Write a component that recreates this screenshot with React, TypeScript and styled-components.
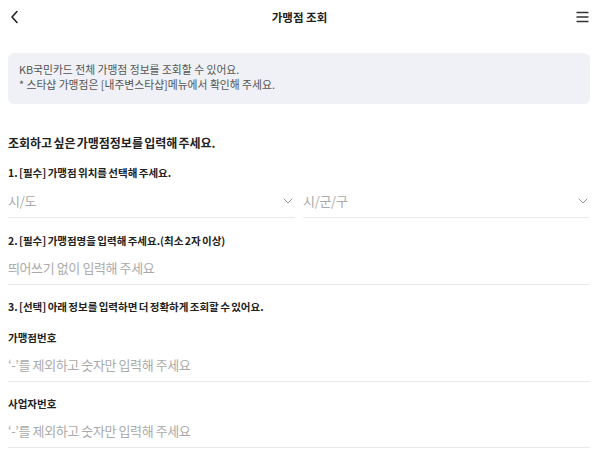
import styled, { createGlobalStyle } from "styled-components"

const GlobalStyle = createGlobalStyle`
  html, body {
    margin: 0;
    padding: 0;
    background: #fff;
  }
  body {
    font-family: "Noto Sans CJK KR", "Noto Sans", sans-serif;
    color: #222;
  }
  * {
    box-sizing: border-box;
  }
`

const Page = styled.div`
  width: 600px;
  display: flex;
  flex-direction: column;
`
const Header = styled.header`
  height: 34px;
  display: grid;
  grid-template-columns: 40px 1fr 40px;
  align-items: center;
  padding: 0 11px 0 10px;
`
const HeaderButton = styled.button<{ align?: string }>`
  border: none;
  background: none;
  padding: 0;
  display: flex;
  justify-content: ${props => props.align ?? "flex-start"};
  align-items: center;
  color: #333;
  cursor: pointer;
`
const Title = styled.h1`
  margin: 0;
  text-align: center;
  font-size: 11.5px;
  font-weight: 700;
  color: #222;
`
const InfoBox = styled.div`
  margin: 19px 10px 0 8px;
  padding: 9px 11px 12px;
  background-color: #eff1f6;
  border-radius: 6px;
  font-size: 10.8px;
  line-height: 15px;
  color: #555;
`
const InfoLine = styled.p`
  margin: 0;
`
const Form = styled.div`
  padding: 0 10px 0 8px;
  display: flex;
  flex-direction: column;
`
const Heading = styled.h2`
  margin: 30px 0 0;
  font-size: 12px;
  line-height: 18px;
  font-weight: 700;
  color: #222;
  word-spacing: -1.5px;
`
const Label = styled.div<{ top?: string }>`
  margin-top: ${props => props.top ?? "14px"};
  font-size: 10.5px;
  line-height: 16px;
  font-weight: 700;
  color: #222;
  word-spacing: -1px;
`
const SelectRow = styled.div`
  margin-top: 3px;
  display: grid;
  grid-template-columns: 1fr 1fr;
  column-gap: 8px;
`
const Select = styled.div`
  height: 34px;
  display: flex;
  align-items: center;
  justify-content: space-between;
  border-bottom: 1px solid #e9e9e9;
  font-size: 13px;
  letter-spacing: -0.3px;
  color: #aaa;
  padding-right: 2px;
`
const Input = styled.input`
  margin-top: 2px;
  height: 34px;
  width: 100%;
  border: none;
  border-bottom: 1px solid #e9e9e9;
  padding: 0;
  outline: none;
  background: none;
  font-family: "Noto Sans CJK KR", "Noto Sans", sans-serif;
  font-size: 13px;
  letter-spacing: -0.4px;
  color: #222;
  &::placeholder {
    color: #aaa;
  }
`

function Chevron() {
  return (
    <svg width="10" height="6" viewBox="0 0 10 6" fill="none">
      <path d="M1 1l4 4 4-4" stroke="#999" strokeWidth="1" strokeLinecap="round" strokeLinejoin="round" />
    </svg>
  )
}

export default function App() {
  return (
    <Page>
      <GlobalStyle />
      <Header>
        <HeaderButton aria-label="뒤로">
          <svg width="10" height="14" viewBox="0 0 10 14" fill="none">
            <path d="M7 1.5L2 7l5 5.5" stroke="#222" strokeWidth="1.6" strokeLinecap="round" strokeLinejoin="round" />
          </svg>
        </HeaderButton>
        <Title>가맹점 조회</Title>
        <HeaderButton align="flex-end" aria-label="메뉴">
          <svg width="13" height="12" viewBox="0 0 13 12" fill="none">
            <path d="M0.5 1.5h12M0.5 6h12M0.5 10.5h12" stroke="#333" strokeWidth="1.5" />
          </svg>
        </HeaderButton>
      </Header>

      <InfoBox>
        <InfoLine>KB국민카드 전체 가맹점 정보를 조회할 수 있어요.</InfoLine>
        <InfoLine>* 스타샵 가맹점은 [내주변스타샵]메뉴에서 확인해 주세요.</InfoLine>
      </InfoBox>

      <Form>
        <Heading>조회하고 싶은 가맹점정보를 입력해 주세요.</Heading>

        <Label top="13px">1. [필수] 가맹점 위치를 선택해 주세요.</Label>
        <SelectRow>
          <Select>
            시/도
            <Chevron />
          </Select>
          <Select>
            시/군/구
            <Chevron />
          </Select>
        </SelectRow>

        <Label top="15px">2. [필수] 가맹점명을 입력해 주세요.(최소 2자 이상)</Label>
        <Input placeholder="띄어쓰기 없이 입력해 주세요" />

        <Label>3. [선택] 아래 정보를 입력하면 더 정확하게 조회할 수 있어요.</Label>

        <Label top="15px">가맹점번호</Label>
        <Input placeholder="‘-’를 제외하고 숫자만 입력해 주세요" />

        <Label>사업자번호</Label>
        <Input placeholder="‘-’를 제외하고 숫자만 입력해 주세요" />
      </Form>
    </Page>
  )
}
